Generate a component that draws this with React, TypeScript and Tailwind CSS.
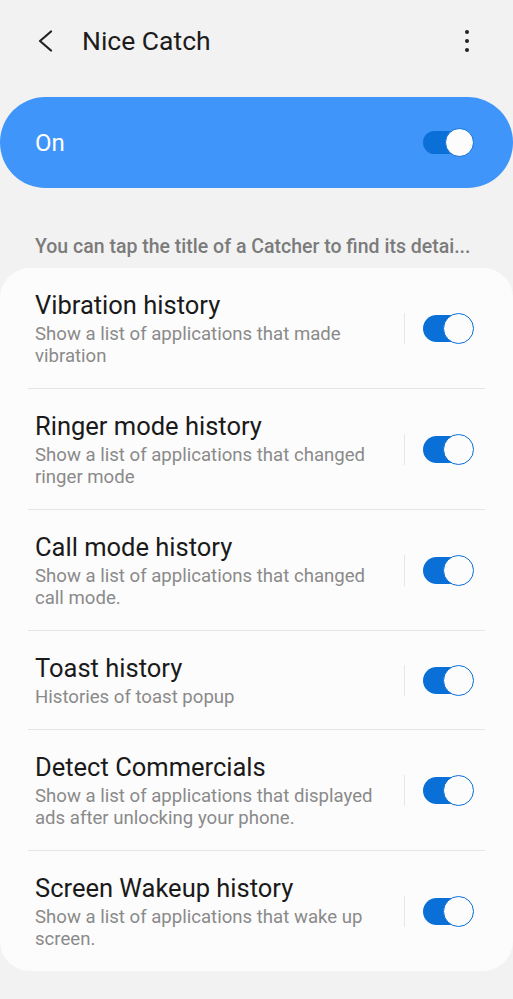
import React from 'react'

type Catcher = {
    title: string
    description: string
}

const catchers: Catcher[] = [
    { title: 'Vibration history', description: 'Show a list of applications that made vibration' },
    { title: 'Ringer mode history', description: 'Show a list of applications that changed ringer mode' },
    { title: 'Call mode history', description: 'Show a list of applications that changed call mode.' },
    { title: 'Toast history', description: 'Histories of toast popup' },
    { title: 'Detect Commercials', description: 'Show a list of applications that displayed ads after unlocking your phone.' },
    { title: 'Screen Wakeup history', description: 'Show a list of applications that wake up screen.' },
]

function Toggle({ large }: { large?: boolean }) {
    // thumb sits over the right end of the track
    return (
        <div className="relative w-[51px] h-[31px] flex items-center shrink-0">
            <div className={`w-[44px] rounded-full bg-[#0a6fd7] ${large ? 'h-[23px]' : 'h-[27px]'}`} />
            <div
                className={`absolute right-0 rounded-full bg-[#fcfcfc] border-[1.5px] border-[#0a6fd7] ${
                    large ? 'top-[1px] w-[29px] h-[29px]' : 'top-0 w-[31px] h-[31px]'
                }`}
            />
        </div>
    )
}

export default function App() {
    return (
        <div
            className="w-[513px] h-[999px] bg-[#f2f2f2] overflow-hidden flex flex-col"
            style={{ fontFamily: 'Roboto, "Noto Sans", sans-serif' }}
        >
            {/* Top bar */}
            <header className="h-[82px] flex items-center shrink-0">
                <button className="ml-[37px] w-[16px] h-[22px] flex items-center justify-center">
                    <svg width="16" height="22" viewBox="0 0 16 22" fill="none">
                        <path d="M14 1.5 L3 11 L14 20.5" stroke="#222" strokeWidth="2.2" strokeLinecap="round" strokeLinejoin="round" />
                    </svg>
                </button>
                <h1 className="ml-[29px] text-[26.5px] leading-[30px] text-[#1c1c1c]">Nice Catch</h1>
                <div className="ml-auto mr-[44px] flex flex-col items-center gap-[4.5px]">
                    <span className="w-[4.5px] h-[4.5px] rounded-full bg-[#222]" />
                    <span className="w-[4.5px] h-[4.5px] rounded-full bg-[#222]" />
                    <span className="w-[4.5px] h-[4.5px] rounded-full bg-[#222]" />
                </div>
            </header>

            {/* Master switch */}
            <div className="mt-[15px] h-[91px] rounded-full bg-[#3f95f9] flex items-center justify-between pl-[35px] pr-[39px] shrink-0">
                <span className="text-[24px] text-white">On</span>
                <Toggle large />
            </div>

            <p className="mt-[47px] pl-[35px] text-[19.5px] leading-[24px] font-medium text-[#7b7b7b] whitespace-nowrap">
                You can tap the title of a Catcher to find its detai...
            </p>

            {/* Catcher list */}
            <div className="mt-[9px] rounded-[30px] bg-[#fcfcfc] flex flex-col">
                {catchers.map((c, i) => (
                    <div key={c.title}>
                        {i > 0 && <div className="mx-[28px] h-px bg-[#e5e5e5]" />}
                        <div className="flex items-center pl-[35px] pr-[39px] pt-[22px] pb-[21px]">
                            <div className="flex-1 min-w-0 pr-[18px]">
                                <div className="text-[25.5px] leading-[30px] text-[#1a1a1a]">{c.title}</div>
                                <div className="mt-[3px] text-[18.6px] leading-[22px] text-[#8a8a8a]">{c.description}</div>
                            </div>
                            <div className="w-px h-[31px] bg-[#e6e6e6] mr-[18px]" />
                            <Toggle />
                        </div>
                    </div>
                ))}
            </div>
        </div>
    )
}
